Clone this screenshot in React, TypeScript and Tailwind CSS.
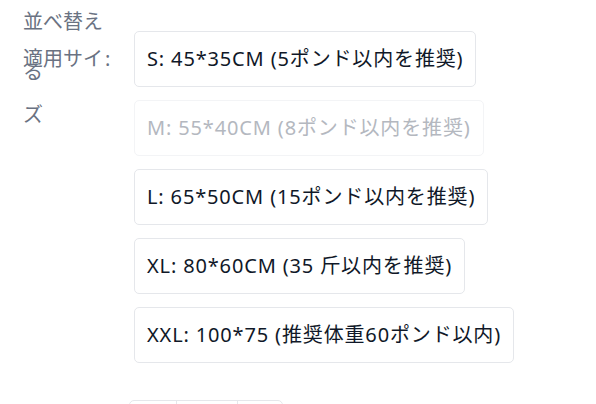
const sizes = [
  { label: "S: 45*35CM (5ポンド以内を推奨)", disabled: false },
  { label: "M: 55*40CM (8ポンド以内を推奨)", disabled: true },
  { label: "L: 65*50CM (15ポンド以内を推奨)", disabled: false },
  { label: "XL: 80*60CM (35 斤以内を推奨)", disabled: false },
  { label: "XXL: 100*75 (推奨体重60ポンド以内)", disabled: false },
];

export default function App() {
  return (
    <div
      className="relative w-[596px] h-[404px] overflow-hidden bg-white"
      style={{ fontFamily: '"Noto Sans", "Noto Sans CJK JP", sans-serif' }}
    >
      {/* sort label sits over the size row */}
      <div className="absolute left-[23px] top-[-3px] w-[80px] text-[20px] leading-[50px] text-gray-500">
        並べ替える
      </div>

      <div className="flex pt-[31px] pl-[23px]">
        <div className="flex w-[111px] shrink-0 text-[20px] leading-[56px] text-gray-500">
          <span className="w-[82px]">適用サイズ</span>
          <span>:</span>
        </div>

        <div className="flex flex-col items-start gap-[13px]">
          {sizes.map((s) => (
            <button
              key={s.label}
              disabled={s.disabled}
              className={`h-[56px] px-[12px] rounded-[5px] border text-[20px] tracking-[0.85px] whitespace-nowrap ${
                s.disabled
                  ? "border-gray-100 text-[#b4b8bf]"
                  : "border-gray-200 text-gray-900"
              }`}
            >
              {s.label}
            </button>
          ))}

          <div className="mt-[24px] ml-[-5px] flex h-[40px] w-[154px] rounded-[5px] border border-gray-200">
            <div className="w-[47px] border-r border-gray-200" />
            <div className="w-[61px] border-r border-gray-200" />
            <div className="flex-1" />
          </div>
        </div>
      </div>
    </div>
  );
}
